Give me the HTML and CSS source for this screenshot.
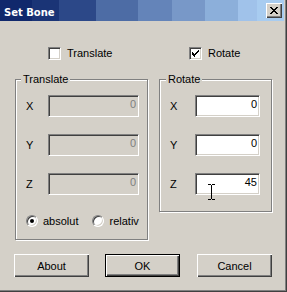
FILE: index.html
```html
<!DOCTYPE html>
<html lang="en">
<head>
    <meta charset="UTF-8">
    <title>Set Bone</title>
    <link rel="stylesheet" href="styles.css">
</head>
<body>
<div class="window">
    <div class="titlebar">
        <span class="title">Set Bone</span>
        <span class="close">
            <svg width="8" height="7" viewBox="0 0 8 7"><path d="M0 0h2v1h-2zM6 0h2v1h-2zM1 1h2v1h-2zM5 1h2v1h-2zM2 2h4v1h-4zM3 3h2v1h-2zM2 4h4v1h-4zM1 5h2v1h-2zM5 5h2v1h-2zM0 6h2v1h-2zM6 6h2v1h-2z" fill="#000"/></svg>
        </span>
    </div>
    <div class="checks">
        <label class="check check-left"><span class="box"></span>Translate</label>
        <label class="check check-right"><span class="box">
            <svg width="7" height="7" viewBox="0 0 7 7"><path d="M6 0h1v1h-1zM5 1h1v1h-1zM0 2h1v1h-1zM4 2h1v1h-1zM0 3h2v1h-2zM3 3h2v1h-2zM0 4h4v1h-4zM1 5h2v1h-2zM2 6h1v1h-1z M6 1h1v1h-1zM5 2h1v1h-1zM6 2h0z M1 3h0z" fill="#000"/></svg>
        </span>Rotate</label>
    </div>
    <div class="groups">
        <div class="group g-translate">
            <span class="legend">Translate</span>
            <div class="fields">
                <div class="field"><span class="field-label">X</span><span class="edit disabled">0</span></div>
                <div class="field"><span class="field-label">Y</span><span class="edit disabled">0</span></div>
                <div class="field"><span class="field-label">Z</span><span class="edit disabled">0</span></div>
            </div>
            <div class="radios">
                <label class="radio"><span class="dot on"></span>absolut</label>
                <label class="radio radio-2"><span class="dot"></span>relativ</label>
            </div>
        </div>
        <div class="group g-rotate">
            <span class="legend">Rotate</span>
            <div class="fields">
                <div class="field"><span class="field-label">X</span><span class="edit">0</span></div>
                <div class="field"><span class="field-label">Y</span><span class="edit">0</span></div>
                <div class="field"><span class="field-label">Z</span><span class="edit">45
                    <svg class="ibeam" width="8" height="16" viewBox="0 0 8 16"><path d="M0 0.5h3M4 0.5h3M3.5 1v14M0 15.5h3M4 15.5h3" stroke="#000" fill="none"/></svg>
                </span></div>
            </div>
        </div>
    </div>
    <div class="buttons">
        <span class="btn">About</span>
        <span class="btn btn-default">OK</span>
        <span class="btn btn-last">Cancel</span>
    </div>
</div>
</body>
</html>
```

FILE: styles.css
```css
*{
    margin: 0;
    padding: 0;
    box-sizing: border-box;
}
body{
    font: 11px "Liberation Sans", Arial, sans-serif;
    color: #000;
    background: #d4d0c8;
}
.window{
    width: 287px;
    height: 292px;
    background: #d4d0c8;
    border-right: 1px solid #404040;
    border-bottom: 1px solid #404040;
    box-shadow: inset -1px -1px #808080;
    padding: 0 2px 2px 0;
}
.titlebar{
    height: 21px;
    display: flex;
    justify-content: space-between;
    padding: 0 2px 0 4px;
    color: #fff;
    background: linear-gradient(to right,
        #10286c 0, #10286c 32px,
        #1a3476 32px, #1a3476 59px,
        #2c4888 59px, #2c4888 96px,
        #4d6ca5 96px, #4d6ca5 138px,
        #6484b9 138px, #6484b9 172px,
        #7898c8 172px, #7898c8 205px,
        #8cafda 205px, #8cafda 238px,
        #a0c2ea 238px, #a0c2ea 257px,
        #a8ccf0 257px);
}
.title{
    font: bold 10px "DejaVu Sans", sans-serif;
    line-height: 21px;
    padding-top: 2px;
}
.close{
    width: 16px;
    height: 15px;
    margin-top: 3px;
    display: flex;
    align-items: center;
    justify-content: center;
    background: #d4d0c8;
    box-shadow: inset 1px 1px #fff, inset -1px -1px #404040, inset -2px -2px #808080;
}
.checks{
    display: grid;
    grid-template-columns: 133px 113px;
    column-gap: 11px;
    margin: 26px 0 0 15px;
    height: 13px;
}
.check{
    display: flex;
    align-items: center;
    gap: 6px;
    line-height: 13px;
}
.check-left{
    padding-left: 33px;
}
.check-right{
    padding-left: 30px;
}
.box{
    width: 13px;
    height: 13px;
    display: flex;
    align-items: center;
    justify-content: center;
    background: #fff;
    border: 1px solid;
    border-color: #808080 #fff #fff #808080;
    box-shadow: inset 1px 1px #404040, inset -1px -1px #d4d0c8;
}
.groups{
    display: flex;
    align-items: flex-start;
    gap: 11px;
    margin: 19px 0 0 15px;
}
.group{
    border: 1px solid #808080;
    box-shadow: 1px 1px #fff, inset 1px 1px #fff;
}
.g-translate{
    width: 133px;
    padding-bottom: 12px;
}
.g-rotate{
    width: 113px;
    padding-bottom: 16px;
}
.legend{
    display: block;
    width: fit-content;
    margin: -7px 0 0 5px;
    padding: 0 2px;
    line-height: 13px;
    background: #d4d0c8;
}
.g-rotate .legend{
    margin-left: 6px;
}
.fields{
    display: grid;
    row-gap: 17px;
    margin-top: 9px;
}
.field{
    display: flex;
    align-items: center;
    height: 22px;
}
.field-label{
    width: 32px;
    padding-left: 10px;
}
.g-rotate .field-label{
    width: 35px;
}
.edit{
    position: relative;
    display: block;
    width: 91px;
    height: 22px;
    text-align: right;
    padding: 1px 2px 0 0;
    line-height: 14px;
    background: #fff;
    border: 1px solid;
    border-color: #808080 #fff #fff #808080;
    box-shadow: inset 1px 1px #404040, inset -1px -1px #d4d0c8;
}
.g-rotate .edit{
    width: 65px;
}
.edit.disabled{
    background: #d4d0c8;
    color: #808080;
}
.ibeam{
    position: absolute;
    left: 12px;
    top: 10px;
}
.radios{
    display: flex;
    align-items: center;
    height: 13px;
    margin-top: 19px;
    padding-left: 10px;
}
.radio{
    display: flex;
    align-items: center;
    gap: 5px;
}
.radio-2{
    margin-left: 14px;
}
.dot{
    width: 12px;
    height: 12px;
    border-radius: 50%;
    display: flex;
    align-items: center;
    justify-content: center;
    background: #fff;
    border: 1px solid;
    border-color: #808080 #fff #fff #808080;
    box-shadow: inset 1px 1px #404040, inset -1px -1px #d4d0c8;
}
.dot.on::after{
    content: "";
    width: 4px;
    height: 4px;
    border-radius: 50%;
    background: #000;
}
.buttons{
    display: flex;
    gap: 16px;
    margin: 14px 0 0 14px;
}
.btn{
    width: 75px;
    height: 23px;
    display: flex;
    align-items: center;
    justify-content: center;
    background: #d4d0c8;
    box-shadow: inset 1px 1px #fff, inset -1px -1px #404040, inset -2px -2px #808080;
}
.btn-default{
    border: 1px solid #000;
}
.btn-last{
    margin-left: 1px;
}
```
